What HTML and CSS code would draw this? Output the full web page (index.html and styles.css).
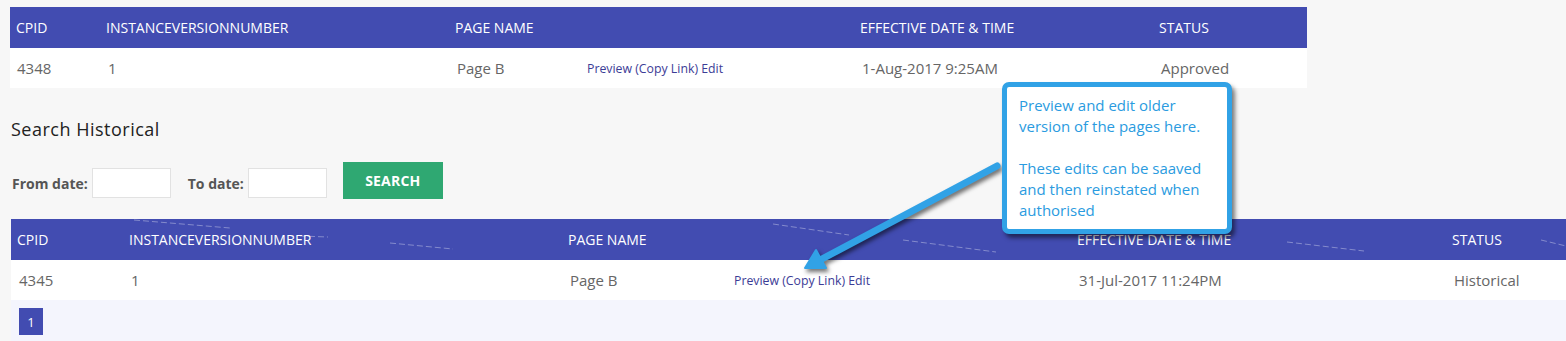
FILE: index.html
```html
<!DOCTYPE html>
<html lang="en">

<head>
    <meta charset="UTF-8" />
    <meta name="viewport" content="width=device-width, initial-scale=1.0" />
    <title>Page versions</title>
    <link rel="stylesheet" href="styles.css">
</head>

<body>
    <div class="page">
        <!-- current version -->
        <table class="grid grid-current">
            <colgroup>
                <col style="width:96px"><col style="width:349px"><col style="width:132px">
                <col style="width:273px"><col style="width:299px"><col style="width:148px">
            </colgroup>
            <thead>
                <tr>
                    <th class="first">CPID</th>
                    <th>INSTANCEVERSIONNUMBER</th>
                    <th>PAGE NAME</th>
                    <th></th>
                    <th>EFFECTIVE DATE &amp; TIME</th>
                    <th>STATUS</th>
                </tr>
            </thead>
            <tbody>
                <tr>
                    <td class="first">4348</td>
                    <td>1</td>
                    <td>Page B</td>
                    <td class="links"><a href="#">Preview</a> (<a href="#">Copy Link</a>) <a href="#">Edit</a></td>
                    <td>1-Aug-2017 9:25AM</td>
                    <td>Approved</td>
                </tr>
            </tbody>
        </table>

        <h2 class="section-title">Search Historical</h2>

        <form class="search-form">
            <label for="from-date">From date:</label>
            <input id="from-date" type="text" class="date-input">
            <label for="to-date">To date:</label>
            <input id="to-date" type="text" class="date-input">
            <button type="button" class="search-button">SEARCH</button>
        </form>

        <!-- historical versions -->
        <div class="historical">
            <table class="grid grid-history">
                <colgroup>
                    <col style="width:118px"><col style="width:439px"><col style="width:166px">
                    <col style="width:343px"><col style="width:375px"><col style="width:150px">
                </colgroup>
                <thead>
                    <tr>
                        <th class="first">CPID</th>
                        <th>INSTANCEVERSIONNUMBER</th>
                        <th>PAGE NAME</th>
                        <th></th>
                        <th>EFFECTIVE DATE &amp; TIME</th>
                        <th>STATUS</th>
                    </tr>
                </thead>
                <tbody>
                    <tr>
                        <td class="first">4345</td>
                        <td>1</td>
                        <td>Page B</td>
                        <td class="links"><a href="#">Preview</a> (<a href="#">Copy Link</a>) <a href="#">Edit</a></td>
                        <td>31-Jul-2017 11:24PM</td>
                        <td>Historical</td>
                    </tr>
                </tbody>
            </table>
            <div class="pager">
                <span class="pager-item">1</span>
            </div>
        </div>

        <!-- annotation -->
        <svg class="annotation" viewBox="0 0 1566 341" width="1566" height="341">
            <g class="scratches">
                <line x1="134" y1="220" x2="230" y2="228" />
                <line x1="300" y1="236" x2="328" y2="237" />
                <line x1="390" y1="243" x2="453" y2="249" />
                <line x1="773" y1="224" x2="849" y2="235" />
                <line x1="903" y1="240" x2="996" y2="252" />
                <line x1="1287" y1="242" x2="1364" y2="251" />
                <line x1="1541" y1="240" x2="1566" y2="246" />
            </g>
            <g class="arrow">
                <line x1="997" y1="166" x2="820" y2="260" />
                <polygon points="805,268 826,268 816,250" />
            </g>
        </svg>

        <div class="callout">
            <p>Preview and edit older<br>version of the pages here.</p>
            <p>These edits can be saaved<br>and then reinstated when<br>authorised</p>
        </div>
    </div>
</body>

</html>
```

FILE: styles.css
```css
/*  ====== layout ====== */
html,
body {
    overflow: hidden;
}

body {
    margin: 0;
    padding: 0;
    background: #f7f7f7;
    font-family: 'Open Sans', Arial, sans-serif;
    color: #666;
}

.page {
    position: relative;
    width: 1566px;
    height: 341px;
    padding: 7px 0 0 10px;
    box-sizing: border-box;
}

/*  ====== tables ====== */
.grid {
    border-collapse: collapse;
    table-layout: fixed;
    background: #fff;
}

.grid-current {
    width: 1297px;
}

.grid-history {
    width: 1591px;
}

.grid th {
    height: 41px;
    padding: 0;
    background: #424cb1;
    color: #fff;
    font-size: 14px;
    font-weight: 400;
    text-align: left;
    white-space: nowrap;
}

.grid td {
    height: 40px;
    padding: 0 0 0 2px;
    font-size: 15px;
    color: #666;
    white-space: nowrap;
}

.grid th.first {
    padding-left: 6px;
}

.grid td.first {
    padding-left: 7px;
}

.grid-history th.first {
    padding-left: 6px;
}

.grid-history td.first {
    padding-left: 8px;
}

.grid td.links {
    font-size: 12.3px;
    color: #3c3c96;
    padding-left: 0;
}

.links a {
    color: #3c3c96;
    text-decoration: none;
}

/*  ====== search ====== */
.section-title {
    margin: 29px 0 0 1px;
    font-size: 18px;
    line-height: 24px;
    font-weight: 400;
    letter-spacing: .5px;
    color: #222;
}

.search-form {
    display: flex;
    align-items: center;
    height: 37px;
    margin-top: 21px;
}

.search-form label {
    font-size: 14px;
    font-weight: 700;
    color: #555;
    margin: 5px 4px 0 2px;
}

.search-form label + .date-input + label {
    margin-left: 3px;
}

.date-input {
    width: 79px;
    height: 30px;
    box-sizing: border-box;
    margin: 5px 14px 0 0;
    border: 1px solid #e2e2e2;
    background: #fff;
    outline: none;
}

.search-button {
    width: 100px;
    height: 37px;
    margin-left: 2px;
    border: none;
    background: #2fa872;
    color: #fff;
    font-family: 'Open Sans', Arial, sans-serif;
    font-size: 14px;
    font-weight: 700;
    letter-spacing: .2px;
    cursor: pointer;
}

/*  ====== history ====== */
.historical {
    width: 1591px;
    margin-top: 20px;
    margin-left: 1px;
}

.pager {
    height: 41px;
    padding: 8px 0 0 8px;
    box-sizing: border-box;
    background: #f4f5fd;
}

.pager-item {
    display: inline-flex;
    justify-content: center;
    align-items: center;
    width: 24px;
    height: 27px;
    background: #424cb1;
    color: #fff;
    font-size: 13px;
}

/*  ====== annotation ====== */
.annotation {
    position: absolute;
    left: 0;
    top: 0;
    pointer-events: none;
}

.scratches line {
    stroke: rgba(255, 255, 255, .35);
    stroke-width: 1;
    stroke-dasharray: 6 3;
}

.arrow {
    filter: drop-shadow(2px 3px 2px rgba(0, 0, 0, .55));
}

.arrow line {
    stroke: #31a2e6;
    stroke-width: 7;
    stroke-linecap: round;
}

.arrow polygon {
    fill: #31a2e6;
    stroke: #31a2e6;
    stroke-width: 2;
    stroke-linejoin: round;
}

.callout {
    position: absolute;
    left: 1002px;
    top: 82px;
    width: 230px;
    height: 152px;
    box-sizing: border-box;
    padding: 8px 0 0 12px;
    background: #fff;
    border: 5px solid #31a2e6;
    border-radius: 7px;
    box-shadow: 3px 4px 4px rgba(0, 0, 0, .5);
    font-family: 'Open Sans', 'Segoe UI', Arial, sans-serif;
    font-size: 15px;
    line-height: 21px;
    color: #2a9be0;
}

.callout p {
    margin: 0 0 21px;
}
```
